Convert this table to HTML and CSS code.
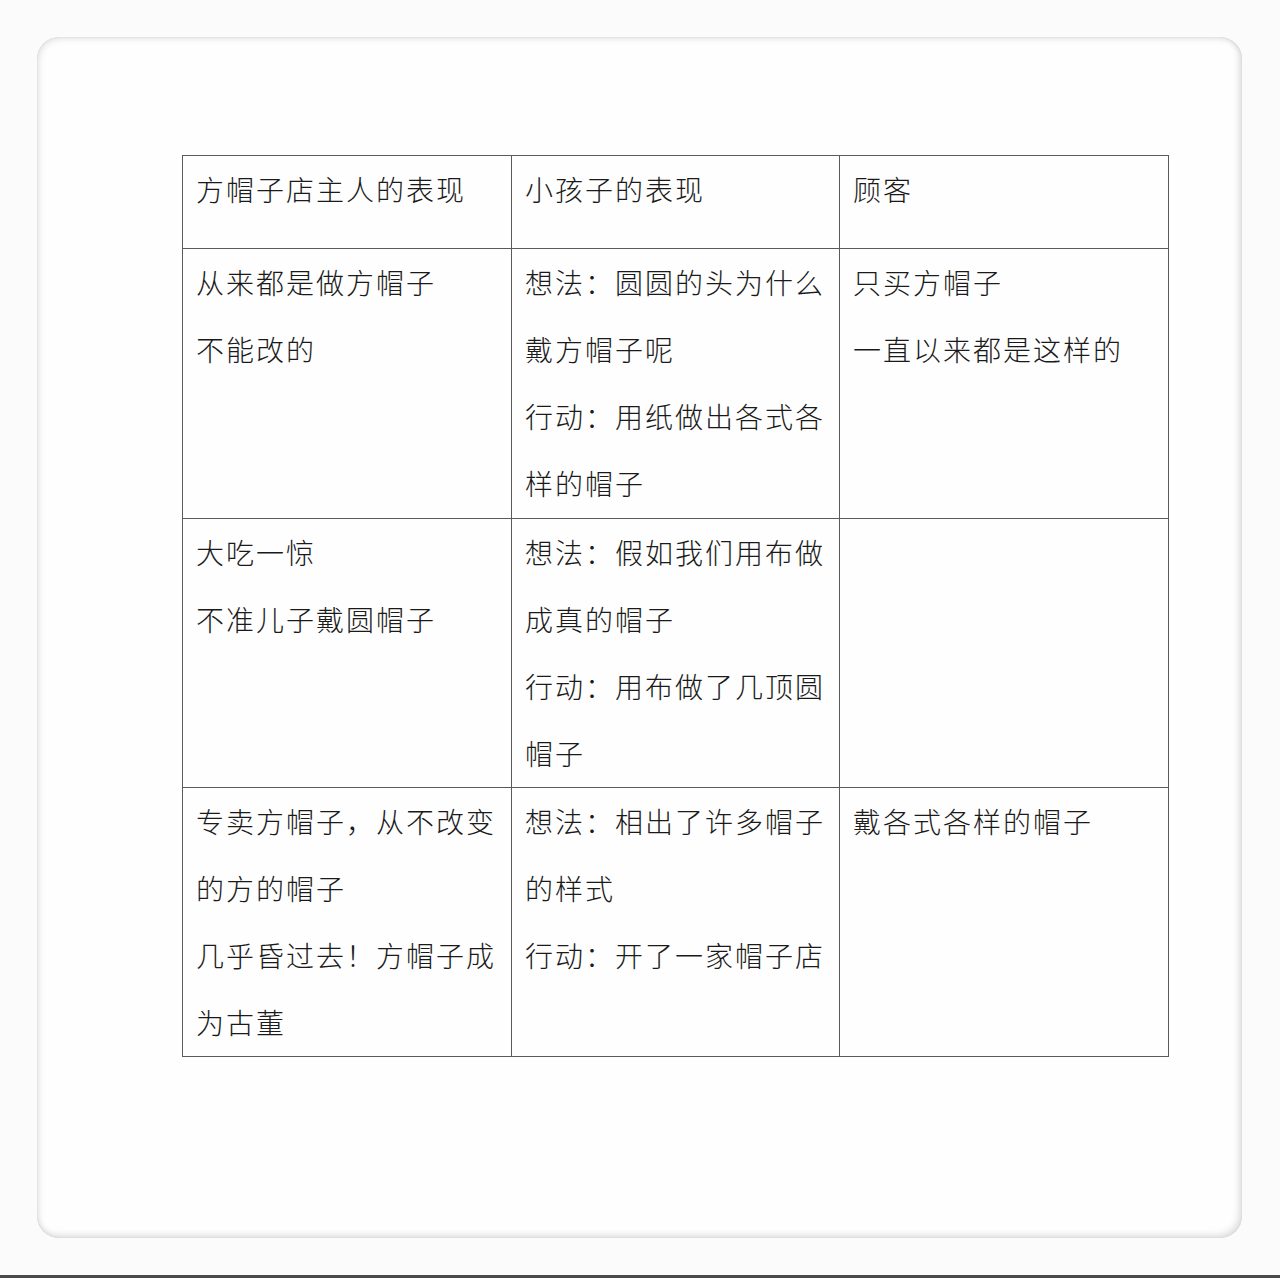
FILE: index.html
```html
<!DOCTYPE html>
<html lang="zh-CN">
<head>
<meta charset="utf-8">
<title>方帽子</title>
<link rel="stylesheet" href="styles.css">
</head>
<body>
<div class="page">
  <div class="card">
    <table class="grid">
      <colgroup><col class="c1"><col class="c2"><col class="c3"></colgroup>
      <tr class="head">
        <td><div class="ln">方帽子店主人的表现</div></td>
        <td><div class="ln">小孩子的表现</div></td>
        <td><div class="ln">顾客</div></td>
      </tr>
      <tr class="row">
        <td><div class="ln">从来都是做方帽子</div><div class="ln">不能改的</div></td>
        <td><div class="ln">想法：圆圆的头为什么</div><div class="ln">戴方帽子呢</div><div class="ln">行动：用纸做出各式各</div><div class="ln">样的帽子</div></td>
        <td><div class="ln">只买方帽子</div><div class="ln">一直以来都是这样的</div></td>
      </tr>
      <tr class="row short">
        <td><div class="ln">大吃一惊</div><div class="ln">不准儿子戴圆帽子</div></td>
        <td><div class="ln">想法：假如我们用布做</div><div class="ln">成真的帽子</div><div class="ln">行动：用布做了几顶圆</div><div class="ln">帽子</div></td>
        <td></td>
      </tr>
      <tr class="row short">
        <td><div class="ln">专卖方帽子，从不改变</div><div class="ln">的方的帽子</div><div class="ln">几乎昏过去！方帽子成</div><div class="ln">为古董</div></td>
        <td><div class="ln">想法：相出了许多帽子</div><div class="ln">的样式</div><div class="ln">行动：开了一家帽子店</div></td>
        <td><div class="ln">戴各式各样的帽子</div></td>
      </tr>
    </table>
  </div>
  <div class="bottom-bar"></div>
</div>
</body>
</html>
```

FILE: styles.css
```css
html, body {
  margin: 0;
  padding: 0;
  background: #fbfbfc;
}
.page {
  width: 1280px;
  height: 1278px;
  position: relative;
  overflow: hidden;
  padding-top: 37px;
  box-sizing: border-box;
}
.card {
  margin-left: 37px;
  width: 1205px;
  height: 1201px;
  border-radius: 22px;
  background: #fefefe;
  box-shadow: inset 2px 2px 6px rgba(0,0,0,0.10), inset -3px -3px 7px rgba(0,0,0,0.12), inset 0 0 1px rgba(0,0,0,0.15);
  padding-top: 118px;
  padding-left: 145px;
  box-sizing: border-box;
}
.grid {
  border-collapse: collapse;
  table-layout: fixed;
  width: 987px;
  font-family: "Noto Sans CJK SC", "Noto Sans CJK JP", sans-serif;
  font-weight: 300;
  color: #1a1a1a;
  font-size: 28px;
  letter-spacing: 2px;
}
.c1 { width: 329px; }
.c2 { width: 328px; }
.c3 { width: 329px; }
.grid td {
  border: 1px solid #5a5a5a;
  vertical-align: top;
  padding: 0 0 0 13px;
  white-space: nowrap;
  overflow: hidden;
}
.head td { height: 92px; }
.row td { height: 269px; }
.row.short td { height: 268px; }
.ln {
  line-height: 67px;
  height: 67px;
}
.bottom-bar {
  position: absolute;
  left: 0;
  right: 0;
  bottom: 0;
  height: 3px;
  background: #4a4a4a;
}
```
